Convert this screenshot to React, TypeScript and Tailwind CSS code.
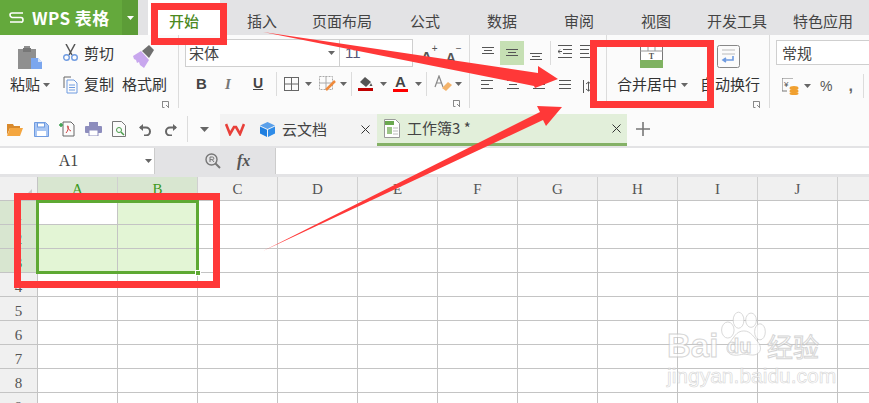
import React from "react";

const Caret = ({ c = "#666", className = "" }: { c?: string; className?: string }) => (
  <svg width="7" height="4" viewBox="0 0 7 4" className={`shrink-0 ${className}`}><path d="M0 0h7L3.5 4z" fill={c} /></svg>
);

const Lines = ({ mode, widths, gap = 4 }: { mode: string; widths: number[]; gap?: number }) => {
  const W = 12;
  return (
    <svg width={W} height={widths.length * gap} viewBox={`0 0 ${W} ${widths.length * gap}`} className="block shrink-0">
      {widths.map((w, i) => {
        const x = mode === "l" ? 0 : mode === "r" ? W - w : (W - w) / 2;
        return <rect key={i} x={x} y={i * gap} width={w} height="1" fill="#555" />;
      })}
    </svg>
  );
};

const X = ({ className = "" }: { className?: string }) => (
  <svg width="9" height="9" viewBox="0 0 9 9" className={`shrink-0 ${className}`}><path d="M.5.500l8 8M8.500.500l-8 8" stroke="#333" /></svg>
);

const Launcher = () => (
  <svg width="7" height="7" viewBox="0 0 7 7" className="block"><path d="M0 .5h6.500V7M.5 .5V6.500h2M4 4l3 3" stroke="#888" fill="none" /></svg>
);

const Launch = ({ pr }: { pr: string }) => (
  <div className={`flex justify-end mt-[3px] h-[8px] ${pr}`}><Launcher /></div>
);

const Sep = ({ className = "" }: { className?: string }) => <div className={`w-px h-[24px] shrink-0 bg-[#dcdcdc] ${className}`} />;

const tabs: [string, string][] = [
  ["插入", "w-[84px]"],
  ["页面布局", "w-[76px]"],
  ["公式", "w-[90px]"],
  ["数据", "w-[64px]"],
  ["审阅", "w-[90px]"],
  ["视图", "w-[64px]"],
  ["开发工具", "w-[98px]"],
  ["特色应用", "w-[74px]"],
];

const Tabs = () => (
  <div className="flex h-[35px] bg-[#e3e3e5] text-[15px] text-[#444]">
    <div className="flex shrink-0 w-[138px] h-[35px] bg-[#64a93c] text-white font-bold">
      <div className="flex items-center w-[122px]">
        <svg width="15" height="11" viewBox="0 0 15 11" className="ml-[9px] shrink-0"><path d="M14 1H3Q1 1 1 3t2 2.500h9q2 0 2 2.500t-2 2H1" fill="none" stroke="#fff" strokeWidth="1.600" /></svg>
        <span className="ml-[8px] text-[17px] tracking-[0.4px] whitespace-nowrap">WPS 表格</span>
      </div>
      <div className="flex w-[16px] items-center justify-center bg-[#5c9c37]"><Caret c="#fff" /></div>
    </div>
    <div className="shrink-0 h-[35px] ml-[10px] w-[72px] bg-white text-center leading-[41px] text-[#4c8a1f] font-medium">开始</div>
    {tabs.map(([t, w]) => (
      <div key={t} className={`${w} shrink-0 text-center leading-[41px] whitespace-nowrap`}>{t}</div>
    ))}
  </div>
);

const ClipboardGroup = () => (
  <div className="w-[179px] shrink-0 h-[73px] border-r border-[#dcdcdc] flex flex-col text-[15px] text-[#333]">
    <div className="flex h-[39px] pt-[6px]">
      <div className="w-[62px] pl-[18px] pt-[5px]">
        <svg width="25" height="24" viewBox="0 0 25 24" className="block">
          <path d="M0 3h6V0h6v3h6v20H0z" fill="#8f8f8f" />
          <rect x="5" y="2" width="8" height="4" fill="#777" />
          <path d="M13 12h7l4 4v7H13z" fill="#7ba6ee" />
          <path d="M20 12v4h4z" fill="#d6e4fb" />
        </svg>
      </div>
      <div className="w-[60px] flex pl-[1px]">
        <svg width="15" height="17" viewBox="0 0 15 17" className="mt-[3px] shrink-0" fill="none">
          <path d="M3 0l6 11M12 0L6 11" stroke="#555" strokeWidth="1.500" />
          <circle cx="3.500" cy="13.500" r="2.800" stroke="#6f9be0" strokeWidth="1.400" />
          <circle cx="11.500" cy="13.500" r="2.800" stroke="#6f9be0" strokeWidth="1.400" />
        </svg>
        <span className="ml-[6px] leading-[24px]">剪切</span>
      </div>
      <div className="pl-[10px] pt-[4px]">
        <svg width="24" height="24" viewBox="0 0 24 24" className="block">
          <path d="M1 11l8-5 8 9-5 8-4-3-1-3-2 1-1-3-2-1z" fill="#c8a7ee" />
          <path d="M10 6l7-6 5 5-5 8z" fill="#6f6f6f" />
        </svg>
      </div>
    </div>
    <div className="flex h-[28px] items-center">
      <div className="w-[62px] pl-[10px] flex items-center"><span>粘贴</span><Caret className="ml-[3px]" /></div>
      <div className="w-[60px] flex items-center pl-[1px]">
        <svg width="15" height="18" viewBox="0 0 15 18" fill="none" className="shrink-0">
          <path d="M1 12V1h7" stroke="#666" />
          <path d="M4 4h7l3 3v10H4z" stroke="#6f9be0" />
          <path d="M6 9h6M6 11.500h6M6 14h6" stroke="#6f9be0" />
        </svg>
        <span className="ml-[6px]">复制</span>
      </div>
      <span className="whitespace-nowrap">格式刷</span>
    </div>
    <Launch pr="pr-[9px]" />
  </div>
);

const FontGroup = () => (
  <div className="w-[291px] shrink-0 h-[73px] border-r border-[#dcdcdc] flex flex-col text-[#444]">
    <div className="flex h-[37px] pt-[4px] pl-[6px]">
      <div className="flex w-[228px] h-[28px] border border-[#cfcfcf] bg-white text-[15px] items-center">
        <span className="ml-[3px] w-[139px]">宋体</span>
        <Caret />
        <div className="w-px h-[26px] bg-[#cfcfcf] ml-[4px]" />
        <span className="ml-[5px] text-[15px] text-[#557] font-['Liberation_Sans',sans-serif]">11</span>
      </div>
      <div className="flex ml-[8px] font-['Liberation_Sans',sans-serif] text-[15px] font-bold text-[#555]">
        <span className="mt-[7px]">A</span><span className="text-[10px] mt-[2px] font-normal">+</span>
        <span className="ml-[8px] mt-[9px] text-[14px]">A</span><span className="text-[10px] mt-[2px] font-normal">−</span>
      </div>
    </div>
    <div className="flex h-[28px] items-center pl-[17px] font-['Liberation_Sans',sans-serif]">
      <span className="font-bold text-[15px] w-[29px] shrink-0">B</span>
      <span className="italic font-['Liberation_Serif',serif] font-bold text-[#777] text-[15px] w-[28px] shrink-0">I</span>
      <span className="underline font-bold text-[14px] w-[23px] shrink-0">U</span>
      <Sep />
      <svg width="15" height="14" viewBox="0 0 15 14" className="ml-[7px] shrink-0" fill="none"><rect x=".5" y=".5" width="14" height="13" stroke="#666" /><path d="M7.500 0v14M0 7h15" stroke="#666" /></svg>
      <Caret className="ml-[6px]" />
      <svg width="17" height="15" viewBox="0 0 17 15" className="ml-[7px] shrink-0" fill="none"><rect x=".5" y=".5" width="13" height="13" stroke="#aaa" strokeDasharray="2 1" /><path d="M7 0v14M0 7h14" stroke="#aaa" /><path d="M7 14l9-9" stroke="#ef8a3c" strokeWidth="2.500" /></svg>
      <Caret className="ml-[4px]" />
      <Sep className="ml-[4px]" />
      <div className="ml-[6px] flex flex-col w-[15px] shrink-0">
        <svg width="15" height="11" viewBox="0 0 15 11"><path d="M2 6l5-5 6 5-5 5z" fill="#555" /><path d="M13 7l1.500 3h-3z" fill="#555" /></svg>
        <div className="h-[3px] bg-[#c00000] mt-[1px]" />
      </div>
      <Caret className="ml-[7px]" />
      <div className="ml-[6px] flex flex-col w-[15px] shrink-0 items-center">
        <span className="font-bold text-[15px] leading-[12px]">A</span>
        <div className="h-[3px] w-[15px] bg-[#ff0000] mt-[1px]" />
      </div>
      <Caret className="ml-[7px]" />
      <Sep className="ml-[4px]" />
      <svg width="18" height="17" viewBox="0 0 18 17" className="ml-[7px] shrink-0" fill="none"><path d="M1 12L5 1l4 11M3 8h4" stroke="#888" strokeWidth="1.200" /><path d="M8 13l6-6 4 3-6 6z" fill="#f3b36b" /></svg>
      <Caret className="ml-[3px]" />
    </div>
    <Launch pr="pr-[9px]" />
  </div>
);

const AlignGroup = () => (
  <div className="w-[137px] shrink-0 h-[73px] border-r border-[#dcdcdc] flex flex-col">
    <div className="flex h-[39px] pt-[6px] pl-[12px]">
      <div className="w-[18px] pt-[6px]"><Lines mode="c" widths={[12, 8, 12]} gap={3} /></div>
      <div className="w-[24px] h-[24px] bg-[#c6e0b4] flex items-center justify-center"><Lines mode="c" widths={[12, 8, 12]} gap={3} /></div>
      <div className="w-[12px] ml-[6px] pt-[12px]"><Lines mode="c" widths={[12, 8, 12]} gap={3} /></div>
      <Sep className="ml-[8px]" />
      <svg width="14" height="13" viewBox="0 0 14 13" className="ml-[7px] mt-[4px] shrink-0" fill="none"><path d="M0 .5h14M5 4.500h9M5 8.500h9M0 12.500h14" stroke="#555" /><path d="M4 6.500H0M2 4.500l-2 2 2 2" stroke="#555" /></svg>
      <svg width="14" height="13" viewBox="0 0 14 13" className="ml-[8px] mt-[4px] shrink-0" fill="none"><path d="M0 .5h14M0 4.500h9M0 8.500h9M0 12.500h14" stroke="#555" /><path d="M10 6.500h4M12 4.500l2 2-2 2" stroke="#555" /></svg>
    </div>
    <div className="flex h-[24px] items-center pl-[11px] gap-[14px]">
      <Lines mode="l" widths={[12, 8, 12]} />
      <Lines mode="c" widths={[12, 8, 12]} />
      <Lines mode="r" widths={[12, 8, 12]} />
      <Lines mode="c" widths={[12, 12, 12]} />
      <svg width="12" height="15" viewBox="0 0 12 15" fill="none" className="ml-[-2px] shrink-0"><path d="M.5 1v13M3 5l2.500-2L8 5M3 10l2.500 2L8 10M5.500 3v9M9 2h3M9 13h3" stroke="#555" /></svg>
    </div>
  </div>
);

const MergeGroup = () => (
  <div className="w-[163px] shrink-0 h-[73px] border-r border-[#dcdcdc] flex flex-col text-[15px] text-[#333]">
    <div className="flex h-[39px] pt-[10px]">
      <svg width="24" height="23" viewBox="0 0 24 23" className="ml-[33px] shrink-0">
        <rect x=".5" y=".5" width="22" height="21" fill="#fff" stroke="#777" />
        <path d="M8 0v6M15 0v6M0 6h23" stroke="#999" />
        <text x="11.500" y="14" fontSize="8" fontWeight="bold" textAnchor="middle" fill="#555" fontFamily="Liberation Serif">T</text>
        <rect x="0" y="15" width="23" height="8" fill="#7fb261" />
      </svg>
      <svg width="23" height="24" viewBox="0 0 23 24" className="ml-[53px] shrink-0" fill="none">
        <rect x=".5" y=".5" width="22" height="22" rx="2" stroke="#888" />
        <path d="M5 5h13M5 9h13" stroke="#bbb" />
        <path d="M16 11v4h-9M9 13l-3 2 3 2" stroke="#6f9be0" strokeWidth="1.600" />
      </svg>
    </div>
    <div className="flex h-[28px] items-center pl-[10px] whitespace-nowrap">
      <span>合并居中</span><Caret className="ml-[4px]" />
      <span className="ml-[12px]">自动换行</span>
    </div>
    <Launch pr="pr-[9px]" />
  </div>
);

const NumberGroup = () => (
  <div className="flex-1 min-w-0 h-[73px] flex flex-col text-[#444]">
    <div className="flex h-[39px] pt-[5px] pl-[6px]">
      <div className="w-[110px] shrink-0 h-[25px] border border-[#cfcfcf] bg-white text-[15px] pl-[5px] leading-[23px]">常规</div>
    </div>
    <div className="flex h-[24px] items-center pl-[12px] font-['Liberation_Sans',sans-serif]">
      <svg width="17" height="17" viewBox="0 0 17 17" fill="none" className="shrink-0"><path d="M11 0H0v13h5" stroke="#777" /><text x="2" y="9" fontSize="8" fill="#555">¥</text><ellipse cx="12" cy="10" rx="4.500" ry="2" fill="#f0a030" /><ellipse cx="12" cy="13" rx="4.500" ry="2" fill="#f0a030" /><ellipse cx="12" cy="15.500" rx="4.500" ry="1.500" fill="#f0a030" /></svg>
      <Caret className="ml-[5px]" />
      <span className="ml-[9px] text-[14px] text-[#555]">%</span>
      <span className="ml-[16px] text-[16px] font-bold text-[#666] leading-[10px] w-[5px]">,</span>
      <Sep className="ml-[10px]" />
    </div>
  </div>
);

const Ribbon = () => (
  <div className="flex h-[79px] bg-[#fbfbfb]">
    <ClipboardGroup />
    <FontGroup />
    <AlignGroup />
    <MergeGroup />
    <NumberGroup />
  </div>
);

const QuickBar = () => (
  <div className="flex h-[32px] bg-[#fbfbfb] text-[15px] text-[#444]">
    <div className="flex shrink-0 items-center w-[220px] pl-[7px] pb-[2px]">
      <svg width="16" height="13" viewBox="0 0 16 13" className="shrink-0"><path d="M0 1h6l1 2h6v2H3L0 12z" fill="#d98a2c" /><path d="M3 5h13l-3 8H0z" fill="#f4a640" /></svg>
      <svg width="15" height="15" viewBox="0 0 15 15" className="ml-[11px] shrink-0" fill="none"><path d="M.5.500h11l3 3v11H.5z" fill="#a9c6f3" stroke="#6f9be0" /><rect x="3.500" y="1" width="7" height="4" fill="#fff" stroke="#6f9be0" /><rect x="3" y="9" width="9" height="5" fill="#fff" /></svg>
      <svg width="16" height="16" viewBox="0 0 16 16" className="ml-[10px] shrink-0" fill="none"><path d="M4 1h8l3 3v11H4z" stroke="#666" /><path d="M0 4h4M2 2v4" stroke="#3a9e4c" strokeWidth="1.500" /><path d="M7 12c2-2 3-6 2-7s-1 3 3 5" stroke="#d04040" /></svg>
      <svg width="17" height="14" viewBox="0 0 17 14" className="ml-[10px] shrink-0"><rect x="4" y="0" width="9" height="4" fill="#8d8dbd" /><rect x="0" y="4" width="17" height="7" rx="1" fill="#8d8dbd" /><rect x="4" y="8" width="9" height="6" fill="#fff" stroke="#8d8dbd" /></svg>
      <svg width="14" height="16" viewBox="0 0 14 16" className="ml-[10px] shrink-0" fill="none"><path d="M.5.500h9l4 4v11H.5z" stroke="#777" /><circle cx="7" cy="9" r="2.500" stroke="#4a9c4a" /><path d="M9 11l3 3" stroke="#4a9c4a" strokeWidth="1.500" /></svg>
      <svg width="13" height="13" viewBox="0 0 13 13" className="ml-[12px] shrink-0" fill="none"><path d="M5 1L1 4.500 5 8" fill="#666" /><path d="M2 4.500h6a4 4 0 0 1 0 8H6" stroke="#666" strokeWidth="2" /></svg>
      <svg width="13" height="13" viewBox="0 0 13 13" className="ml-[14px] shrink-0" fill="none"><path d="M8 1l4 3.500L8 8" fill="#666" /><path d="M11 4.500H5a4 4 0 0 0 0 8h2" stroke="#666" strokeWidth="2" /></svg>
      <div className="w-px h-[26px] bg-[#dcdcdc] ml-[9px] shrink-0" />
      <svg width="9" height="5" viewBox="0 0 9 5" className="ml-[12px] shrink-0"><path d="M0 0h9L4.500 5z" fill="#666" /></svg>
    </div>
    <div className="flex shrink-0 w-[157px] items-center bg-[#f3f3f3] pl-[5px] pb-[2px]">
      <svg width="20" height="13" viewBox="0 0 20 13" fill="none" className="shrink-0"><path d="M1 1l4 10 4-7 2 0 4 7 4-10" stroke="#e8403a" strokeWidth="2.600" /></svg>
      <svg width="15" height="15" viewBox="0 0 15 15" className="ml-[15px] shrink-0"><path d="M7.500 0L15 3.500 7.500 7 0 3.500z" fill="#5aa0ea" /><path d="M0 4.500l7 3.300V15L0 11.500z" fill="#1f7fe0" /><path d="M15 4.500L8 7.800V15l7-3.500z" fill="#2f8ce8" /></svg>
      <span className="ml-[7px] w-[79px] shrink-0 whitespace-nowrap">云文档</span>
      <X />
    </div>
    <div className="flex shrink-0 w-[250px] items-center bg-[#e2efda] border-b-[3px] border-[#84b166] pl-[7px]">
      <svg width="16" height="19" viewBox="0 0 16 19" fill="none" className="shrink-0"><path d="M.5.500h11l4 4v14H.5z" fill="#fff" stroke="#999" /><rect x="1" y="2" width="9" height="4" fill="#6aa84f" /><rect x="3" y="8" width="5" height="7" fill="#9cc587" /><path d="M9 9h5M9 12h5M9 15h5" stroke="#bbb" /></svg>
      <span className="ml-[7px] w-[205px] shrink-0 whitespace-nowrap">工作簿3 *</span>
      <X />
    </div>
    <div className="flex items-center pl-[9px] pb-[2px]">
      <svg width="14" height="14" viewBox="0 0 14 14"><path d="M7 0v14M0 7h14" stroke="#777" strokeWidth="1.600" /></svg>
    </div>
  </div>
);

const FormulaBar = () => (
  <div className="flex h-[31px] bg-[#e3e3e5] pt-[2px] font-['Liberation_Serif',serif] text-[#444]">
    <div className="flex shrink-0 w-[155px] h-[26px] bg-white border-r border-[#ccc] items-center">
      <span className="w-[137px] text-center text-[16px]">A1</span>
      <Caret className="ml-[8px]" />
    </div>
    <div className="flex shrink-0 w-[120px] h-[26px] items-center">
      <svg width="16" height="16" viewBox="0 0 16 16" className="ml-[50px] shrink-0" fill="none"><circle cx="6.500" cy="6.500" r="5.500" stroke="#777" strokeWidth="1.400" /><path d="M10.500 10.500L15 15" stroke="#777" strokeWidth="2" /><path d="M5 9V4h2.500a1.300 1.300 0 0 1 0 2.600H5M7 6.500L9 9" stroke="#777" /></svg>
      <span className="ml-[16px] italic text-[16px] font-bold text-[#555]">fx</span>
    </div>
    <div className="flex-1 h-[26px] bg-white border-l border-[#ccc]" />
  </div>
);

const cols = ["A", "B", "C", "D", "E", "F", "G", "H", "I", "J", "K"];
const rows = [1, 2, 3, 4, 5, 6, 7, 8, 9];

const Sheet = () => (
  <div className="relative font-['Liberation_Serif',serif] text-[15px] text-[#555]">
    <div className="flex h-[24px] bg-[#f0f0f0] border-b border-[#c4c4c4]">
      <div className="flex w-[38px] shrink-0 border-r border-[#c4c4c4] bg-[#f0f0f0] justify-end items-end pr-[5px] pb-[1px]">
        <svg width="10" height="10" viewBox="0 0 10 10"><path d="M10 0v10H0z" fill="#c8c8c8" /></svg>
      </div>
      {cols.map((c, i) => (
        <div key={c} className={`w-[80px] shrink-0 text-center border-r border-[#d0d0d0] leading-[24px] ${i < 2 ? "bg-[#d8e6d0] text-[#3d9a21]" : ""}`}>{c}</div>
      ))}
    </div>
    {rows.map((r) => (
      <div key={r} className="flex h-[24px] bg-white">
        <div className={`w-[38px] shrink-0 text-center border-r border-b border-[#c4c4c4] leading-[28px] overflow-hidden ${r < 4 ? "bg-[#d8e6d0] text-[#3d9a21]" : "bg-[#f0f0f0]"}`}>{r}</div>
        {cols.map((c, i) => (
          <div key={c} className={`w-[80px] shrink-0 border-r border-b border-[#c4c4c4] ${r < 4 && i < 2 && !(r === 1 && i === 0) ? "bg-[#e3f5d5]" : ""}`} />
        ))}
      </div>
    ))}
    <div className="absolute left-[36px] top-[23px] w-[163px] h-[74px] border-[3px] border-[#5ea933]" />
    <div className="absolute left-[195px] top-[93px] w-[6px] h-[6px] bg-[#5ea933] border border-white" />
  </div>
);

const Annotations = () => (
  <>
    <svg width="869" height="403" viewBox="0 0 869 403" className="absolute left-0 top-0 pointer-events-none">
      <path d="M263 32L538 73L538 66L558 79L535 88L534 86Z" fill="#ff3838" />
      <path d="M263 251L540 112L537 106L562 107L546 126L543 120Z" fill="#ff3838" />
    </svg>
    <div className="absolute left-[151px] top-[3px] w-[76px] h-[42px] border-[7px] border-[#ff3838]" />
    <div className="absolute left-[590px] top-[40px] w-[124px] h-[68px] border-[7px] border-[#ff3838]" />
    <div className="absolute left-[14px] top-[193px] w-[206px] h-[95px] border-[7px] border-[#ff3838]" />
  </>
);

const Watermark = () => (
  <div className="absolute left-[665px] top-[308px] w-[160px] h-[90px] opacity-70 font-['Liberation_Sans',sans-serif] text-white [-webkit-text-stroke:1px_#c4c4c4]">
    <svg width="50" height="49" viewBox="0 0 56 52" className="absolute left-[53px] top-[2px]" fill="#fff" stroke="#c4c4c4">
      <ellipse cx="11" cy="21" rx="7" ry="9" />
      <ellipse cx="23" cy="10" rx="6" ry="9" />
      <ellipse cx="37" cy="10" rx="6" ry="8" />
      <ellipse cx="47" cy="23" rx="6" ry="9" />
      <path d="M29 22c8 0 12 8 17 14 4 7 0 13-7 13-4 0-7-1-10-1s-7 2-12 1c-7-1-9-8-5-13 6-6 8-14 17-14z" />
    </svg>
    <span className="absolute left-[2px] top-[19px] text-[33px] font-bold leading-[38px]">Bai</span>
    <span className="absolute left-[62px] top-[26px] text-[20px] font-bold leading-[24px]">du</span>
    <span className="absolute left-[102px] top-[20px] text-[26px] leading-[36px] whitespace-nowrap font-['Noto_Sans_CJK_SC',sans-serif]">经验</span>
    <span className="absolute left-[2px] top-[56px] text-[21px] leading-[24px] whitespace-nowrap [-webkit-text-stroke:0.6px_#c4c4c4]">jingyan.baidu.com</span>
  </div>
);

export default function App() {
  return (
    <div className="relative w-[869px] h-[403px] overflow-hidden bg-white font-['Noto_Sans_CJK_SC','Noto_Sans_CJK_JP',sans-serif]">
      <Tabs />
      <Ribbon />
      <QuickBar />
      <FormulaBar />
      <Sheet />
      <Watermark />
      <Annotations />
    </div>
  );
}
